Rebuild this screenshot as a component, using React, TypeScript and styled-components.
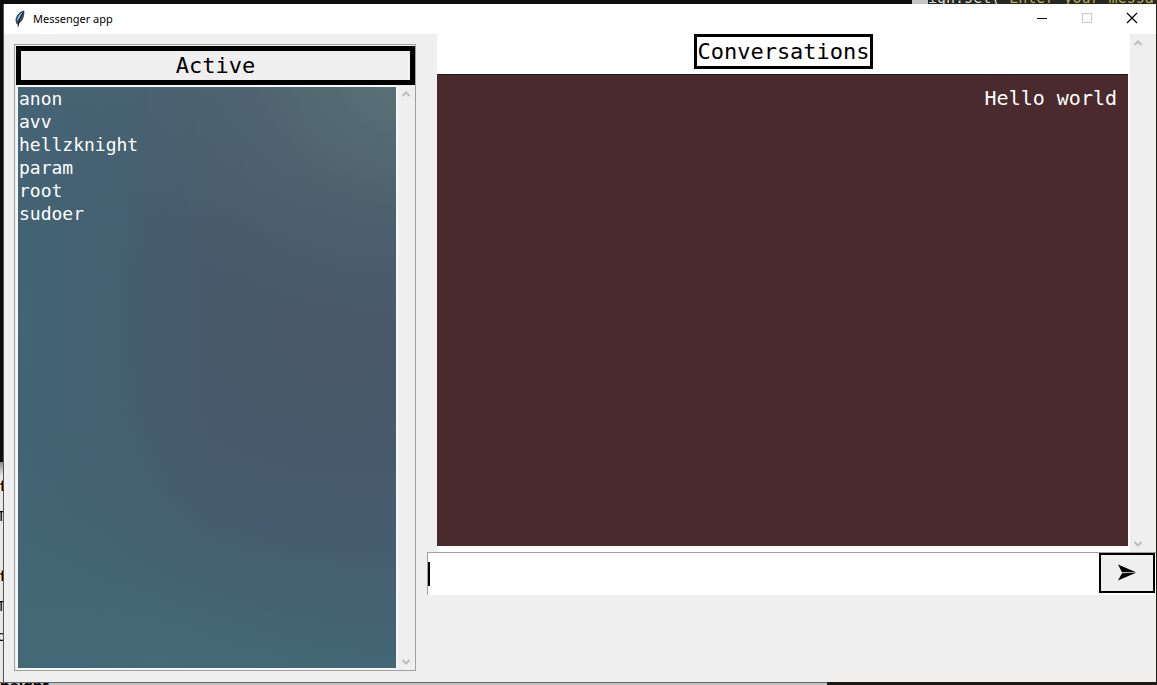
import React from "react";
import styled, { createGlobalStyle } from "styled-components";

const mono = '"DejaVu Sans Mono", "Liberation Mono", monospace';
const sans = '"Noto Sans", "Open Sans", sans-serif';

const GlobalStyle = createGlobalStyle`
  *, *::before, *::after { box-sizing: border-box; }
  html, body { margin: 0; }
  body { font-family: ${sans}; color: #000; background: #0b0b0b; }
  button, input { font: inherit; color: inherit; border-radius: 0; margin: 0; }
  h1, h2, p, ul { margin: 0; padding: 0; font-weight: 400; }
`;

const Desktop = styled.div`
  min-height: 100vh;
  display: grid;
  grid-template: 4px 1fr 3px / 4px minmax(0, 1fr) 1px;
`;

const EditorStrip = styled.div`
  grid-column: 1 / -1;
  display: flex;
  justify-content: flex-end;
  overflow: hidden;
  background: #0d0d0d;
`;

const EditorCode = styled.div`
  width: 245px;
  height: 4px;
  overflow: hidden;
  display: flex;
  align-items: flex-end;
  white-space: pre;
  font: 15px/12px ${mono};
  color: #d8d8d0;
  background: #272822;
  border-left: 16px solid #c4c4c4;
`;

const EditorString = styled.span`
  color: #b5ae52;
`;

const LeftStrip = styled.div`
  display: flex;
  flex-direction: column;
  overflow: hidden;
  background: linear-gradient(#0b0b0b 458px, #8a8a8a 458px, #e8e8e8 472px);
  border-right: 1px solid #555;
  padding-top: 466px;
  font: 15px/30px ${sans};
`;

const Fragment = styled.span<{ $strong?: boolean }>`
  height: 30px;
  white-space: nowrap;
  text-indent: ${(p) => (p.$strong ? 0 : -3)}px;
  font-weight: ${(p) => (p.$strong ? 700 : 400)};
`;

const RightStrip = styled.div`
  background: #1c1c1a;
`;

const BottomStrip = styled.div`
  grid-column: 1 / -1;
  display: flex;
  overflow: hidden;
  height: 3px;
  font: 700 15px/4px ${sans};
  background: #1c1a19;
`;

const BottomPage = styled.div`
  flex: 0 0 827px;
  height: 3px;
  overflow: hidden;
  border-top: 1px solid #666;
  background: #c2c2c2;
`;

const Window = styled.main`
  display: flex;
  flex-direction: column;
  min-width: 0;
  background: #efefef;
`;

const TitleBar = styled.header`
  height: 30px;
  display: flex;
  align-items: center;
  padding: 0 2px 0 9px;
  background: #fff;
`;

const Title = styled.h1`
  flex: 1;
  margin-left: 6px;
  font: 11px/16px ${sans};
`;

const CaptionButton = styled.button`
  width: 45px;
  height: 30px;
  padding: 0 0 2px;
  border: 0;
  display: grid;
  place-items: center;
  background: transparent;
  color: #000;
  &:disabled { color: #c8c8c8; }
`;

const Body = styled.div`
  flex: 1;
  display: grid;
  grid-template-columns: minmax(0, 423fr) minmax(0, 729fr);
`;

const ActivePanel = styled.section`
  display: flex;
  flex-direction: column;
  margin: 10px 11px 11px 10px;
  padding: 1px 0 0 1px;
  border: 1px solid #a0a0a0;
`;

const ActiveHeading = styled.h2`
  height: 39px;
  border: 5px solid #000;
  text-align: center;
  font: 22px/30px ${mono};
`;

const ListArea = styled.div`
  flex: 1;
  display: flex;
`;

const UserList = styled.ul`
  flex: 1;
  list-style: none;
  border: 2px solid #f6f6f6;
  padding: 0 1px;
  color: #fff;
  font: 18px/23px ${mono};
  background:
    radial-gradient(ellipse 280px 240px at 100% 0%, rgba(88, 112, 118, 1), rgba(84, 104, 112, 0.5) 50%, transparent),
    radial-gradient(ellipse 200px 560px at 0% 40%, rgba(66, 101, 117, 0.9), transparent),
    radial-gradient(ellipse 460px 330px at 85% 42%, rgba(73, 88, 103, 1), rgba(71, 89, 106, 0.9) 40%, transparent),
    linear-gradient(205deg, #4c6472 0%, #456076 45%, #436674 75%, #446c75 92%, #436a77 100%);
`;

const Scrollbar = styled.div<{ $wide?: boolean }>`
  width: ${(p) => (p.$wide ? 26 : 17)}px;
  display: flex;
  flex-direction: column;
  justify-content: space-between;
  padding: 4px ${(p) => (p.$wide ? 13 : 4)}px 3px 3px;
  background: #efefef;
`;

const ScrollButton = styled.button`
  width: 10px;
  height: 10px;
  padding: 0;
  border: 0;
  display: grid;
  place-items: center;
  background: transparent;
  color: #bdbdbd;
`;

const Chat = styled.section`
  display: flex;
  flex-direction: column;
  min-width: 0;
`;

const Conversation = styled.div`
  height: 518px;
  display: flex;
  margin-left: 10px;
`;

const Thread = styled.div`
  flex: 1;
  display: flex;
  flex-direction: column;
  align-items: center;
  padding-bottom: 6px;
  background: #fff;
`;

const ThreadHeading = styled.h2`
  height: 35px;
  margin-bottom: 5px;
  border: 3px solid #000;
  font: 22px/29px ${mono};
`;

const Messages = styled.div`
  flex: 1;
  align-self: stretch;
  margin-right: 2px;
  padding: 11px 11px 0;
  border-top: 1px solid #241516;
  text-align: right;
  color: #fff;
  font: 20px/24px ${mono};
  background: #4a2a2c;
`;

const Composer = styled.form`
  height: 43px;
  display: flex;
  border-top: 1px solid #a0a0a0;
  border-left: 1px solid #a0a0a0;
  padding-right: 1px;
  background: #fff;
`;

const Caret = styled.span`
  width: 2px;
  height: 24px;
  margin-top: 9px;
  background: #000;
`;

const MessageInput = styled.input`
  flex: 1;
  min-width: 0;
  border: 0;
  padding: 0 4px;
  outline: 0;
  font: 20px/24px ${mono};
  background: transparent;
`;

const SendButton = styled.button`
  width: 56px;
  height: 40px;
  padding: 0;
  border: 2px solid #000;
  display: grid;
  place-items: center;
  background: #efefef;
`;

const users = ["anon", "avv", "hellzknight", "param", "root", "sudoer"];

function Chevron({ down }: { down?: boolean }) {
  return (
    <svg width="10" height="8" viewBox="0 0 10 8" fill="none" stroke="currentColor" strokeWidth="2">
      <path d={down ? "M1.5 2 5 5.5 8.5 2" : "M1.5 6 5 2.5 8.5 6"} />
    </svg>
  );
}

function ScrollBar({ name, wide }: { name: string; wide?: boolean }) {
  return (
    <Scrollbar $wide={wide}>
      <ScrollButton type="button" aria-label={`Scroll ${name} up`}><Chevron /></ScrollButton>
      <ScrollButton type="button" aria-label={`Scroll ${name} down`}><Chevron down /></ScrollButton>
    </Scrollbar>
  );
}

function Feather() {
  return (
    <svg width="14" height="18" viewBox="0 0 14 18">
      <path d="M10.8 1C6.5 2 3 6 3 11L4.2 14C8 12.500 11.300 8 10.800 1Z" fill="#3d5f85" />
      <path d="M10 2C7 3.500 4.500 7 4.200 11 6 8.500 8.500 5.500 10 2Z" fill="#9cc4ea" />
      <path d="M10.300 2.500C7.500 6 6 9 5 16.500" fill="none" stroke="#101418" strokeWidth="1.1" />
      <path d="M10.800 1C6.500 2 3 6 3 11L4.200 14C8 12.500 11.300 8 10.800 1Z" fill="none" stroke="#17202b" strokeWidth=".8" />
    </svg>
  );
}

export default function App() {
  return (
    <>
      <GlobalStyle />
      <Desktop>
        <EditorStrip aria-hidden="true">
          <EditorCode>ign.set(<EditorString>"Enter your messa</EditorString></EditorCode>
        </EditorStrip>
        <LeftStrip aria-hidden="true">
          <Fragment $strong>f</Fragment>
          <Fragment>T</Fragment>
          <Fragment />
          <Fragment $strong>f</Fragment>
          <Fragment>T</Fragment>
          <Fragment>o</Fragment>
        </LeftStrip>
        <Window>
          <TitleBar>
            <Feather />
            <Title>Messenger app</Title>
            <CaptionButton type="button" aria-label="Minimize">
              <svg width="12" height="12" stroke="currentColor"><path d="M1 6.500H11" /></svg>
            </CaptionButton>
            <CaptionButton type="button" aria-label="Maximize" disabled>
              <svg width="12" height="12" fill="none" stroke="currentColor"><path d="M1.500 1.500H10.500V10.500H1.500Z" /></svg>
            </CaptionButton>
            <CaptionButton type="button" aria-label="Close">
              <svg width="12" height="12" stroke="currentColor" strokeWidth="1.2"><path d="M1 1 11 11M11 1 1 11" /></svg>
            </CaptionButton>
          </TitleBar>
          <Body>
            <ActivePanel>
              <ActiveHeading>Active</ActiveHeading>
              <ListArea>
                <UserList>{users.map((u) => <li key={u}>{u}</li>)}</UserList>
                <ScrollBar name="users" />
              </ListArea>
            </ActivePanel>
            <Chat>
              <Conversation>
                <Thread>
                  <ThreadHeading>Conversations</ThreadHeading>
                  <Messages>Hello world</Messages>
                </Thread>
                <ScrollBar name="messages" wide />
              </Conversation>
              <Composer onSubmit={(e) => e.preventDefault()}>
                <Caret />
                <MessageInput type="text" aria-label="Message" />
                <SendButton type="submit" aria-label="Send">
                  <svg width="20" height="18" viewBox="0 0 20 18">
                    <path d="M1 .5 19 8.300H5ZM1 16.500 19 8.700 5 9.300Z" />
                  </svg>
                </SendButton>
              </Composer>
            </Chat>
          </Body>
        </Window>
        <RightStrip />
        <BottomStrip aria-hidden="true"><BottomPage>height</BottomPage></BottomStrip>
      </Desktop>
    </>
  );
}
